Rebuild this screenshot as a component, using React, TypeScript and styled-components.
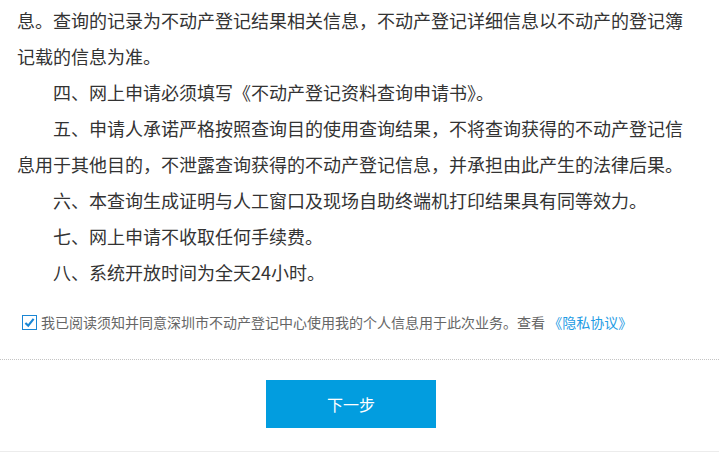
import React, { useState } from 'react';
import styled, { createGlobalStyle } from 'styled-components';

const GlobalStyle = createGlobalStyle`
    html, body {
        margin: 0;
        padding: 0;
        background: #fff;
    }
    body {
        font-family: "Microsoft YaHei", "Noto Sans CJK SC", "Noto Sans", sans-serif;
    }
`;

const notices = [
    { text: '息。查询的记录为不动产登记结果相关信息，不动产登记详细信息以不动产的登记簿记载的信息为准。', indent: false },
    { text: '四、网上申请必须填写《不动产登记资料查询申请书》。', indent: true },
    {
        text: '五、申请人承诺严格按照查询目的使用查询结果，不将查询获得的不动产登记信息用于其他目的，不泄露查询获得的不动产登记信息，并承担由此产生的法律后果。',
        indent: true,
    },
    { text: '六、本查询生成证明与人工窗口及现场自助终端机打印结果具有同等效力。', indent: true },
    { text: '七、网上申请不收取任何手续费。', indent: true },
    { text: '八、系统开放时间为全天24小时。', indent: true },
];

const App: React.FC = () => {
    const [agreed, setAgreed] = useState(true);

    return (
        <Wrapper>
            <GlobalStyle />
            <Notice>
                {notices.map((n, i) => (
                    <Para key={i} $indent={n.indent}>
                        {n.text}
                    </Para>
                ))}
            </Notice>
            <AgreeRow onClick={() => setAgreed(!agreed)}>
                <CheckBox $checked={agreed}>
                    {agreed && (
                        <svg width="11" height="11" viewBox="0 0 11 11">
                            <path d="M1.4 6 L4.2 8.6 L9.6 1.8" fill="none" stroke="#1a86d4" strokeWidth="2.1" />
                        </svg>
                    )}
                </CheckBox>
                <AgreeText>
                    我已阅读须知并同意深圳市不动产登记中心使用我的个人信息用于此次业务。查看 <Link>《隐私协议》</Link>
                </AgreeText>
            </AgreeRow>
            <Footer>
                <NextButton>下一步</NextButton>
            </Footer>
        </Wrapper>
    );
};

export default App;

const Wrapper = styled.div`
    width: 719px;
    height: 452px;
    box-sizing: border-box;
    border-bottom: 1px solid #ececec;
    overflow: hidden;
`;
const Notice = styled.div`
    padding: 2px 27px 0 17px;
`;
const Para = styled.p<{ $indent: boolean }>`
    margin: 0;
    font-size: 18px;
    line-height: 36px;
    color: #333;
    text-indent: ${(p) => (p.$indent ? '2em' : '0')};
`;
const AgreeRow = styled.label`
    display: flex;
    align-items: center;
    height: 20px;
    margin-top: 22px;
    padding-left: 22px;
    cursor: pointer;
`;
const CheckBox = styled.span<{ $checked: boolean }>`
    display: flex;
    align-items: center;
    justify-content: center;
    width: 15px;
    height: 15px;
    box-sizing: border-box;
    border: 1px solid ${(p) => (p.$checked ? '#1a86d4' : '#aaa')};
    background: #fff;
    margin-right: 4px;
`;
const AgreeText = styled.span`
    font-size: 14px;
    line-height: 20px;
    color: #666;
    white-space: nowrap;
`;
const Link = styled.a`
    color: #1f9ce4;
    cursor: pointer;
`;
const Footer = styled.div`
    margin-top: 27px;
    border-top: 1px dotted #c4c4c4;
    padding-top: 20px;
    display: flex;
    justify-content: center;
    padding-right: 17px;
`;
const NextButton = styled.button`
    width: 170px;
    height: 48px;
    border: none;
    border-radius: 0;
    background: #029ddf;
    color: #fff;
    font-family: "Microsoft YaHei", "Noto Sans CJK SC", sans-serif;
    font-size: 16px;
    cursor: pointer;
`;
